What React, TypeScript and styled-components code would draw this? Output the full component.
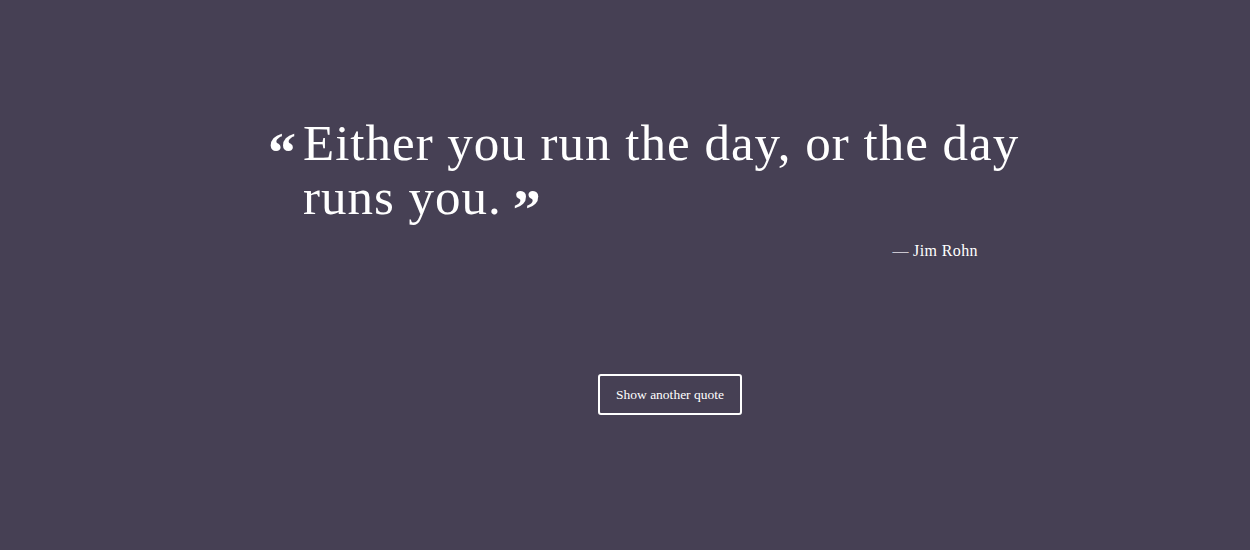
import React from "react";
import styled, { createGlobalStyle } from "styled-components";

const Global = createGlobalStyle`
  html, body { margin: 0; padding: 0; }
  body {
    background: #464054;
    font-family: "Liberation Serif", "DejaVu Serif", serif;
    color: #fff;
  }
`;

const Page = styled.div`
  width: 1250px;
  height: 550px;
  background: #464054;
  padding-top: 116px;
  box-sizing: border-box;
`;

const Box = styled.div`
  width: 800px;
  margin-left: 270px;
  display: flex;
  flex-direction: column;
`;

const QuoteRow = styled.div`
  display: flex;
  align-items: flex-start;
`;

const Mark = styled.span`
  font-family: "Liberation Serif", serif;
  font-weight: 700;
  font-size: 56px;
  line-height: 1;
  color: #fff;
`;

const OpenMark = styled(Mark)`
  width: 33px;
  flex: none;
  margin-top: 9px;
  margin-left: -2px;
  padding-right: 2px;
`;

const CloseMark = styled(Mark)`
  display: inline-block;
  margin-left: 11px;
  line-height: 40px;
  vertical-align: -15px;
  letter-spacing: 0;
`;

const Text = styled.p`
  margin: 0;
  font-size: 51px;
  line-height: 54px;
  font-weight: 400;
  letter-spacing: 1px;
  width: 760px;
`;

const Author = styled.div`
  margin-top: 12px;
  padding-right: 92px;
  text-align: right;
  font-size: 16px;
  letter-spacing: 0.4px;
`;

const Dash = styled.span`
  color: #c9c6d0;
  margin-right: 4px;
`;

const ButtonRow = styled.div`
  display: flex;
  justify-content: center;
  margin-top: 114px;
`;

const Button = styled.button`
  height: 41px;
  width: 144px;
  background: transparent;
  color: #fff;
  border: 2px solid #fff;
  border-radius: 3px;
  font-family: "Liberation Serif", serif;
  font-size: 13.5px;
  cursor: pointer;
`;

export default function App() {
  return (
    <>
      <Global />
      <Page>
        <Box>
          <QuoteRow>
            <OpenMark>“</OpenMark>
            <Text>
              Either you run the day, or the day runs you.<CloseMark>”</CloseMark>
            </Text>
          </QuoteRow>
          <Author>
            <Dash>—</Dash>Jim Rohn
          </Author>
          <ButtonRow>
            <Button>Show another quote</Button>
          </ButtonRow>
        </Box>
      </Page>
    </>
  );
}
